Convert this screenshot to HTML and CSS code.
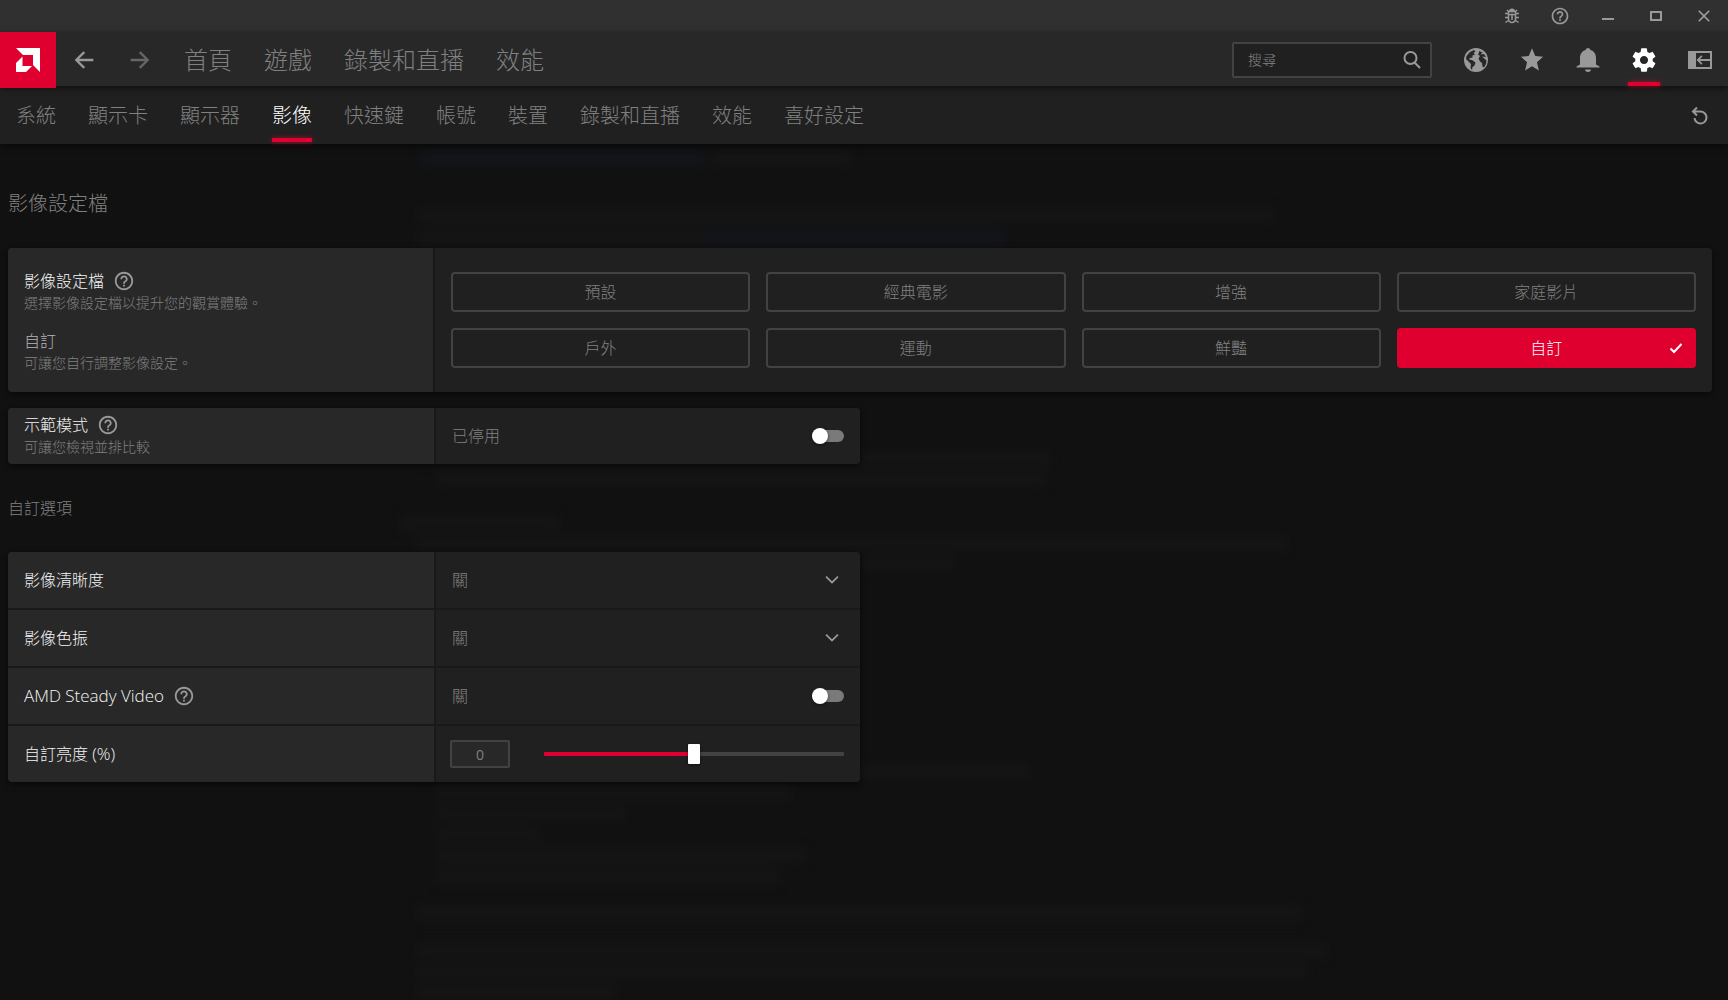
FILE: index.html
```html
<!DOCTYPE html>
<html lang="zh-Hant">
<head>
<meta charset="utf-8">
<meta name="viewport" content="width=device-width, initial-scale=1">
<title>影像</title>
<link rel="stylesheet" href="styles.css">
</head>
<body>
<svg width="0" height="0" class="sprite" aria-hidden="true">
  <symbol id="help" viewBox="0 0 24 24"><path d="M11 18h2v-2h-2v2zm1-16C6.480 2 2 6.480 2 12s4.480 10 10 10 10-4.480 10-10S17.520 2 12 2zm0 18c-4.410 0-8-3.590-8-8s3.590-8 8-8 8 3.590 8 8-3.590 8-8 8zm0-14c-2.210 0-4 1.790-4 4h2c0-1.100.9-2 2-2s2 .9 2 2c0 2-3 1.750-3 5h2c0-2.250 3-2.500 3-5 0-2.210-1.790-4-4-4z"/></symbol>
  <symbol id="chevron" viewBox="0 0 24 24"><path d="M7.410 8.590 12 13.170l4.590-4.580 1 1L12 15.200 6.410 9.590z"/></symbol>
</svg>

<svg class="backdrop" aria-hidden="true">
  <g class="haze">
    <rect class="haze-link" x="420" y="152" width="286" height="14"/><rect x="712" y="152" width="140" height="14"/>
    <rect x="416" y="208" width="860" height="14"/><rect x="416" y="230" width="290" height="14"/><rect class="haze-link" x="706" y="230" width="300" height="14"/>
    <rect x="430" y="452" width="620" height="14"/><rect x="436" y="472" width="610" height="14"/>
    <rect x="400" y="516" width="160" height="14"/><rect x="416" y="536" width="872" height="14"/><rect x="860" y="556" width="96" height="14"/>
    <rect x="430" y="764" width="600" height="14"/><rect x="436" y="786" width="356" height="14"/><rect x="436" y="806" width="190" height="14"/>
    <rect x="436" y="828" width="106" height="14"/><rect x="436" y="848" width="370" height="14"/><rect x="436" y="870" width="344" height="14"/>
    <rect x="416" y="906" width="886" height="14"/><rect x="416" y="944" width="912" height="14"/><rect x="416" y="964" width="890" height="14"/><rect x="416" y="984" width="200" height="14"/>
  </g>
</svg>

<div class="titlebar">
  <button class="icon-btn window-btn" aria-label="回報錯誤"><svg class="icon-18" viewBox="0 0 18 18"><path class="stroke bug" d="M5.500 7.500h7v4.500a3.500 3.500 0 0 1-7 0zM2 6.500h3l1-2h6l1 2h3M2 10.500h3.500M12.500 10.500H16M2.500 15.500l3-2M15.500 15.500l-3-2M4 3l2 2M14 3l-2 2M9 8v5"/><path d="M6 4.500a3 3 0 0 1 6 0z"/></svg></button>
  <button class="icon-btn window-btn" aria-label="說明"><svg class="icon-20"><use href="#help"/></svg></button>
  <button class="icon-btn window-btn" aria-label="最小化"><svg class="icon-18" viewBox="0 0 18 18"><path d="M3 11h12v2H3z"/></svg></button>
  <button class="icon-btn window-btn" aria-label="最大化"><svg class="icon-18" viewBox="0 0 18 18"><path d="M3 4v10h12V4zm2 2h8v6H5z"/></svg></button>
  <button class="icon-btn window-btn" aria-label="關閉"><svg class="icon-20" viewBox="0 0 24 24"><path d="M19 6.410 17.590 5 12 10.590 6.410 5 5 6.410 10.590 12 5 17.590 6.410 19 12 13.410 17.590 19 19 17.590 13.410 12z"/></svg></button>
</div>

<header class="header">
  <a class="logo" href="#" aria-label="AMD"><svg width="26" height="26" viewBox="0 0 26 26"><path d="M1 1h24v24l-7-7V8H8zM7.500 9.500V19H17l-6 6H1v-9z"/></svg></a>
  <button class="icon-btn history-btn" aria-label="上一頁"><svg class="icon-28" viewBox="0 0 24 24"><path d="M20 11H7.830l5.090-5.090L11.500 4.500 4 12l7.500 7.500 1.410-1.410L7.830 13H20z"/></svg></button>
  <button class="icon-btn history-btn forward" aria-label="下一頁"><svg class="icon-28" viewBox="0 0 24 24"><path d="M12.500 4.500l-1.410 1.410L16.170 11H4v2h12.170l-5.080 5.090 1.410 1.410L20 12z"/></svg></button>
  <nav class="main-nav">
    <a href="#">首頁</a><a href="#">遊戲</a><a href="#">錄製和直播</a><a href="#">效能</a>
  </nav>
  <label class="search">
    <input type="text" placeholder="搜尋" aria-label="搜尋">
    <svg class="icon-20" viewBox="0 0 20 20"><circle class="stroke" cx="8.500" cy="8" r="6"/><path class="stroke" d="m12.500 12.500 5.500 5.500"/></svg>
  </label>
  <div class="tools">
    <button class="icon-btn tool" aria-label="網頁"><svg class="icon-24" viewBox="0 0 24 24"><circle cx="12" cy="12" r="12"/><path class="land" d="M2.500 8 6 4l4-2 1.500 1.500L9.500 5l1.500 1.500-2.500 1V9.500L6 10l-1 1.500 3 .5 3.500 2.500-1 3-2 1.500-.5 3L6.500 20l.5-4-3-3-2-2zM15 3l3.500 1.500-2 2 3.500-.5 2 3-4-.5 4.500 4-.5 3.500-2 3.500-1.500-1-.5-3.500-2-1.500-1.500-3 1.500-2.500-2-1.500 1-2z"/></svg></button>
    <button class="icon-btn tool" aria-label="我的最愛"><svg class="icon-28" viewBox="0 0 24 24"><path d="M12 17.270 17.900 21l-1.640-7.030L21.500 9.240l-6.690-.61L12 2 9.190 8.630 2.500 9.240l5.240 4.730L6.100 21z"/></svg></button>
    <button class="icon-btn tool" aria-label="通知"><svg class="icon-24" viewBox="0 0 24 24"><path d="M12 24c1.700 0 3-1 3-2.500H9C9 23 10.300 24 12 24zM20 16.500V10c0-4-2-7-5.500-8C14 .7 13.200 0 12 0S10 .7 9.500 2C6 3 4 6 4 10v6.500L.5 18.500v1h23v-1z"/></svg></button>
    <button class="icon-btn tool active" aria-label="設定"><svg class="icon-28" viewBox="0 0 24 24"><path d="M19.430 12.980c.04-.32.07-.64.07-.98s-.03-.66-.07-.98l2.110-1.650c.19-.15.24-.42.12-.64l-2-3.460c-.12-.22-.39-.3-.61-.22l-2.490 1c-.52-.4-1.080-.73-1.690-.98l-.38-2.650C14.460 2.180 14.250 2 14 2h-4c-.25 0-.46.18-.49.42l-.38 2.650c-.61.25-1.170.59-1.690.98l-2.490-1c-.23-.09-.49 0-.61.22l-2 3.460c-.13.22-.07.49.12.64l2.110 1.650c-.04.32-.07.65-.07.98s.03.66.07.98l-2.110 1.650c-.19.15-.24.42-.12.64l2 3.460c.12.22.39.3.61.22l2.490-1c.52.4 1.080.73 1.690.98l.38 2.650c.03.24.24.42.49.42h4c.25 0 .46-.18.49-.42l.38-2.650c.61-.25 1.170-.59 1.690-.98l2.490 1c.23.09.49 0 .61-.22l2-3.460c.12-.22.07-.49-.12-.64zM12 15.500c-1.930 0-3.500-1.570-3.500-3.500s1.570-3.500 3.500-3.500 3.500 1.570 3.500 3.500-1.570 3.500-3.500 3.500z"/></svg></button>
    <button class="icon-btn tool" aria-label="側邊面板"><svg class="icon-24" viewBox="0 0 24 24"><path d="M0 3v18h24V3zm8 2h14v6H12l2.500-2.500-1.200-1.200L8.500 12l4.800 4.700 1.200-1.200L12 13h10v6H8z"/></svg></button>
  </div>
</header>

<div class="subbar">
  <nav class="sub-nav">
    <a href="#">系統</a><a href="#">顯示卡</a><a href="#">顯示器</a><a href="#" class="active" aria-current="page">影像</a><a href="#">快速鍵</a><a href="#">帳號</a><a href="#">裝置</a><a href="#">錄製和直播</a><a href="#">效能</a><a href="#">喜好設定</a>
  </nav>
  <button class="icon-btn tool" aria-label="重設"><svg class="icon-20" viewBox="0 0 20 20"><path class="stroke" d="M3 5.500h7.500a6 6 0 1 1-6 6.500M7 1.500l-4 4 4 4"/></svg></button>
</div>

<main class="content">
  <h1 class="page-title">影像設定檔</h1>

  <section class="card profile">
    <div class="label-cell">
      <h2 class="label">影像設定檔 <svg class="help"><use href="#help"/></svg></h2>
      <p class="hint">選擇影像設定檔以提升您的觀賞體驗。</p>
      <h3 class="label chosen">自訂</h3>
      <p class="hint">可讓您自行調整影像設定。</p>
    </div>
    <div class="profiles">
      <button class="option">預設</button>
      <button class="option">經典電影</button>
      <button class="option">增強</button>
      <button class="option">家庭影片</button>
      <button class="option">戶外</button>
      <button class="option">運動</button>
      <button class="option">鮮豔</button>
      <button class="option selected" aria-pressed="true">自訂<svg class="check" viewBox="0 0 16 16"><path class="stroke" d="M2.500 8.500 6 12l7.500-8"/></svg></button>
    </div>
  </section>

  <section class="card half">
    <div class="row">
      <div class="label-cell">
        <label class="label" for="demo">示範模式 <svg class="help"><use href="#help"/></svg></label>
        <p class="hint">可讓您檢視並排比較</p>
      </div>
      <div class="value-cell">已停用<input type="checkbox" role="switch" class="switch" id="demo"></div>
    </div>
  </section>

  <h2 class="section-title">自訂選項</h2>

  <section class="card half">
    <div class="row">
      <div class="label-cell"><label class="label" for="sharp">影像清晰度</label></div>
      <div class="value-cell"><select id="sharp"><option>關</option><option>開</option></select><svg class="arrow"><use href="#chevron"/></svg></div>
    </div>
    <div class="row">
      <div class="label-cell"><label class="label" for="vibrance">影像色振</label></div>
      <div class="value-cell"><select id="vibrance"><option>關</option><option>開</option></select><svg class="arrow"><use href="#chevron"/></svg></div>
    </div>
    <div class="row">
      <div class="label-cell"><label class="label latin" for="steady">AMD Steady Video <svg class="help"><use href="#help"/></svg></label></div>
      <div class="value-cell">關<input type="checkbox" role="switch" class="switch" id="steady"></div>
    </div>
    <div class="row">
      <div class="label-cell"><label class="label" for="brightness"><span>自訂亮度 <span class="latin">(%)</span></span></label></div>
      <div class="value-cell range-cell">
        <input type="text" class="number" value="0" aria-label="亮度值">
        <input type="range" class="slider" id="brightness" min="-100" max="100" value="0">
      </div>
    </div>
  </section>
</main>
</body>
</html>
```

FILE: styles.css
```css
:root {
  --red: #e0002f;
  --grey: #999;
  --text-dim: #808080;
  --line: #424242;
}

* { box-sizing: border-box; }

body {
  position: relative;
  margin: 0;
  min-height: 100vh;
  background: #111;
  color: var(--text-dim);
  font: 300 16px/20px "Open Sans", "Noto Sans CJK TC", sans-serif;
}

h1, h2, h3, p { margin: 0; font-weight: inherit; }
a { color: inherit; text-decoration: none; }
button, input, select { font: inherit; color: inherit; }
svg { display: block; flex: none; fill: currentColor; }
.sprite { position: absolute; }
.stroke { fill: none; stroke: currentColor; stroke-width: 2; }
.bug { stroke-width: 1.5; }

.icon-18 { width: 18px; height: 18px; }
.icon-20 { width: 20px; height: 20px; }
.icon-24 { width: 24px; height: 24px; }
.icon-28 { width: 28px; height: 28px; }

/* blurred window showing faintly through the page */
.backdrop { position: absolute; inset: 0; width: 100%; height: 100%; z-index: -1; }
.haze { fill: #151515; filter: blur(5px); }
.haze-link { fill: #12151b; }

.icon-btn {
  display: flex;
  align-items: center;
  justify-content: center;
  padding: 0;
  border: 0;
  background: none;
  color: var(--grey);
}

.titlebar {
  display: flex;
  justify-content: flex-end;
  height: 32px;
  background: #303030;
}
.window-btn { width: 48px; }

.header {
  position: relative;
  z-index: 2;
  display: flex;
  align-items: center;
  height: 54px;
  background: #282828;
  box-shadow: 0 2px 6px rgba(0, 0, 0, .6);
}
.logo {
  display: flex;
  align-items: center;
  justify-content: center;
  align-self: flex-start;
  width: 56px;
  height: 56px;
  background: var(--red);
  color: #fff;
}
.history-btn { width: 56px; height: 54px; padding-top: 2px; }
.forward { color: #666; }
.main-nav {
  display: flex;
  gap: 32px;
  margin-left: 16px;
  padding-top: 2px;
  font-size: 24px;
  line-height: 32px;
}
.search {
  display: flex;
  align-items: center;
  width: 200px;
  height: 36px;
  margin: 2px 0 0 auto;
  padding: 0 8px 0 14px;
  border: 2px solid var(--line);
  border-radius: 2px;
  background: #202020;
  color: var(--grey);
}
.search input {
  flex: 1;
  min-width: 0;
  padding: 0;
  border: 0;
  outline: 0;
  background: none;
  font-size: 14px;
}
.search input::placeholder { color: #858585; }
.tools { display: flex; margin-left: 16px; }
.tool { position: relative; width: 56px; height: 54px; padding-top: 2px; }
.tool.active { color: #fff; }
.land { fill: #282828; }

.tool.active::after, .sub-nav .active::after {
  content: "";
  position: absolute;
  bottom: 0;
  left: 12px;
  right: 12px;
  height: 4px;
  background: var(--red);
  box-shadow: 0 0 5px rgba(224, 0, 47, .7);
}

.subbar {
  position: relative;
  z-index: 1;
  display: flex;
  align-items: center;
  justify-content: space-between;
  height: 58px;
  background: #202020;
  box-shadow: 0 2px 6px rgba(0, 0, 0, .6);
}
.sub-nav {
  display: flex;
  align-self: stretch;
  gap: 32px;
  padding: 0 16px;
  font-size: 20px;
  line-height: 60px;
}
.sub-nav .active { position: relative; color: #fff; }
.sub-nav .active::after { bottom: 2px; left: 0; right: 0; }

.content { padding: 46px 16px 40px 8px; }
.page-title { margin-bottom: 30px; font-size: 20px; line-height: 28px; }
.section-title { margin: 32px 0; font-size: 16px; line-height: 24px; }

.card {
  overflow: hidden;
  border-radius: 4px;
  background: #191919;
  box-shadow: 0 2px 6px rgba(0, 0, 0, .6);
}
.half { width: 50%; }
.profile {
  display: grid;
  grid-template-columns: calc(25% - 1px) 1fr;
  gap: 2px;
  margin-bottom: 16px;
}
.row {
  display: grid;
  grid-template-columns: 50% 1fr;
  gap: 2px;
  min-height: 56px;
}
.row + .row { margin-top: 2px; }
.label-cell {
  display: flex;
  flex-direction: column;
  justify-content: center;
  padding: 0 16px;
  background: #282828;
}
.profile .label-cell { justify-content: flex-start; padding-top: 22px; }
.label {
  display: flex;
  align-items: center;
  gap: 11px;
  font-size: 16px;
  line-height: 22px;
  color: #f4f4f4;
}
.latin { font-size: 17px; }
.chosen { margin-top: 16px; color: #b4b4b4; }
.hint { font-size: 14px; line-height: 22px; }
.help { width: 22px; height: 22px; margin: 0 -2px; color: var(--grey); }

.profiles {
  display: grid;
  grid-template-columns: repeat(4, 1fr);
  gap: 16px;
  padding: 24px 16px;
  background: #202020;
}
.option {
  position: relative;
  height: 40px;
  padding: 0;
  border: 2px solid var(--line);
  border-radius: 4px;
  background: none;
}
.selected { border-color: var(--red); background: var(--red); color: #fff; }
.check { position: absolute; top: 10px; right: 10px; width: 16px; height: 16px; }

.value-cell {
  position: relative;
  display: flex;
  align-items: center;
  justify-content: space-between;
  padding: 0 16px;
  background: #202020;
}
select {
  flex: 1;
  align-self: stretch;
  padding: 0;
  border: 0;
  outline: 0;
  appearance: none;
  background: none;
}
.arrow {
  position: absolute;
  right: 14px;
  width: 28px;
  height: 28px;
  color: var(--grey);
  pointer-events: none;
}

.switch {
  position: relative;
  appearance: none;
  width: 32px;
  height: 12px;
  margin: 0;
  border-radius: 6px;
  background: #7a7a7a;
}
.switch::before {
  content: "";
  position: absolute;
  top: -2px;
  left: 0;
  width: 16px;
  height: 16px;
  border-radius: 50%;
  background: #fff;
  box-shadow: 0 1px 3px rgba(0, 0, 0, .5);
}
.switch:checked { background: var(--red); }
.switch:checked::before { left: 16px; }

.range-cell { gap: 34px; padding-left: 14px; }
.number {
  width: 60px;
  height: 28px;
  padding: 0;
  border: 2px solid var(--line);
  border-radius: 2px;
  background: #282828;
  font-size: 14px;
  font-weight: 400;
  text-align: center;
}
.slider {
  flex: 1;
  min-width: 0;
  height: 20px;
  margin: 0;
  appearance: none;
  background: none;
}
.slider::-webkit-slider-runnable-track {
  height: 4px;
  border-radius: 1px;
  background: linear-gradient(90deg, var(--red) 50%, var(--line) 50%);
}
.slider::-webkit-slider-thumb {
  appearance: none;
  width: 12px;
  height: 20px;
  margin-top: -8px;
  border-radius: 1px;
  background: #fff;
  box-shadow: 0 1px 3px rgba(0, 0, 0, .5);
}
```
